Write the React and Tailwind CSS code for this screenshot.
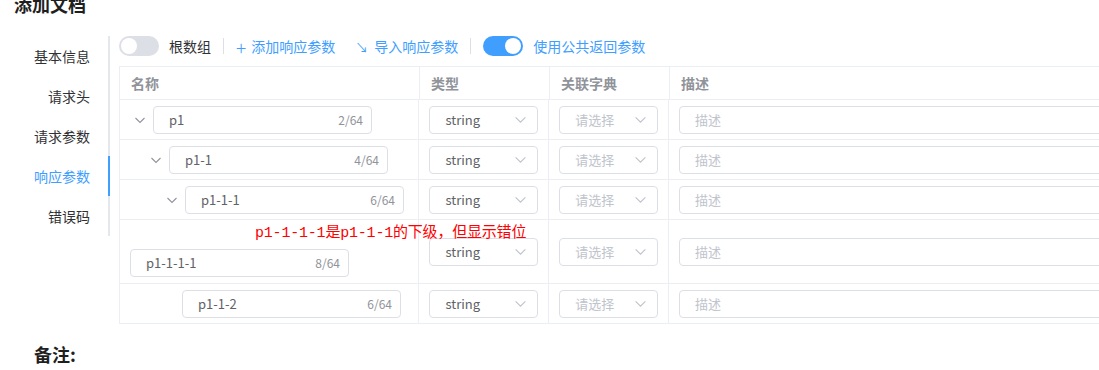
import React from "react"

const navItems = ["基本信息", "请求头", "请求参数", "响应参数", "错误码"]

const rows = [
  { name: "p1", count: "2/64", chevron: true, indent: 0, ml: 11 },
  { name: "p1-1", count: "4/64", chevron: true, indent: 16, ml: 11 },
  { name: "p1-1-1", count: "6/64", chevron: true, indent: 32, ml: 11 },
  { name: "p1-1-1-1", count: "8/64", chevron: false, ml: 11, tall: true },
  { name: "p1-1-2", count: "6/64", chevron: false, ml: 63 },
]

function Chevron({ className }) {
  return (
    <svg viewBox="0 0 12 12" className={className} fill="none" stroke="currentColor" strokeWidth="1.1">
      <path d="M1.5 4 L6 8.5 L10.5 4" />
    </svg>
  )
}

function Switch({ on }) {
  return (
    <div className={`w-10 h-5 rounded-full flex items-center px-[2px] ${on ? "bg-[#409eff] justify-end" : "bg-[#dcdfe6] justify-start"}`}>
      <div className="w-4 h-4 rounded-full bg-white"></div>
    </div>
  )
}

function NameInput({ name, count }) {
  return (
    <div className="w-[219px] h-[28px] border border-[#dcdfe6] rounded flex items-center justify-between pl-[15px] pr-[8px] bg-white">
      <span className="text-[13px] text-[#606266]">{name}</span>
      <span className="text-[12px] text-[#909399]">{count}</span>
    </div>
  )
}

function SelectBox({ width, value, placeholder }) {
  return (
    <div className={`${width} h-[28px] border border-[#dcdfe6] rounded flex items-center justify-between pl-[15px] pr-[10px] bg-white`}>
      <span className={`text-[13px] ${value ? "text-[#606266]" : "text-[#c0c4cc]"}`}>{value || placeholder}</span>
      <Chevron className="w-[13px] h-[13px] text-[#c0c4cc]" />
    </div>
  )
}

export default function App() {
  return (
    <div className="w-[1099px] h-[370px] overflow-hidden bg-white relative" style={{ fontFamily: '"Noto Sans CJK SC", "Liberation Sans", sans-serif' }}>
      <h1 className="pl-[14px] mt-[-9px] h-[26px] text-[18px] font-bold text-[#1f1f1f] leading-[26px]">添加文档</h1>

      <div className="flex mt-[19px]">
        <div className="w-[110px] shrink-0 border-r-2 border-[#e4e7ed] self-start">
          {navItems.map(item => (
            <div key={item}
              className={`h-10 flex items-center justify-end text-[14px] -mr-[2px] ${item === "响应参数" ? "pr-[18px] text-[#409eff] border-r-2 border-[#409eff]" : "pr-[20px] text-[#303133]"}`}>
              {item}
            </div>
          ))}
        </div>

        <div className="pl-[9px] flex-1 min-w-0">
          <div className="h-5 flex items-center text-[14px]">
            <Switch on={false} />
            <span className="ml-[10px] text-[#303133]">根数组</span>
            <span className="mx-[12px] w-px h-4 bg-[#dcdfe6]"></span>
            <span className="text-[#409eff] flex items-center">
              <span className="text-[19px] leading-none mr-[5px] font-extralight">+</span>添加响应参数
            </span>
            <span className="text-[#409eff] flex items-center ml-[20px]">
              <span className="text-[13px] leading-none mr-[6px]">↘</span>导入响应参数
            </span>
            <span className="mx-[12px] w-px h-4 bg-[#dcdfe6]"></span>
            <Switch on={true} />
            <span className="ml-[10px] text-[#409eff]">使用公共返回参数</span>
          </div>

          <div className="mt-[10px] w-[1000px] border-l border-t border-[#ebeef5]">
            <div className="flex h-[33px] border-b border-[#ebeef5] text-[14px] font-bold text-[#909399]">
              <div className="w-[300px] border-r border-[#ebeef5] flex items-center pl-[11px]">名称</div>
              <div className="w-[130px] border-r border-[#ebeef5] flex items-center pl-[11px]">类型</div>
              <div className="w-[120px] border-r border-[#ebeef5] flex items-center pl-[11px]">关联字典</div>
              <div className="flex-1 flex items-center pl-[11px]">描述</div>
            </div>

            {rows.map(row => (
              <div key={row.name} className={`flex border-b border-[#ebeef5] ${row.tall ? "h-[64px]" : "h-[40px]"}`}>
                <div className={`w-[300px] border-r border-[#ebeef5] flex ${row.tall ? "items-end pb-[6px]" : "items-center"}`}>
                  {row.chevron ? (
                    <div className="flex items-center" style={{ paddingLeft: 10 + row.indent }}>
                      <div className="w-5 flex justify-center mr-[3px]">
                        <Chevron className="w-[12px] h-[12px] text-[#909399]" />
                      </div>
                      <NameInput name={row.name} count={row.count} />
                    </div>
                  ) : (
                    <div style={{ marginLeft: row.ml - 1 }}>
                      <NameInput name={row.name} count={row.count} />
                    </div>
                  )}
                </div>
                <div className="w-[130px] border-r border-[#ebeef5] flex items-center pl-[10px]">
                  <SelectBox width="w-[109px]" value="string" />
                </div>
                <div className="w-[120px] border-r border-[#ebeef5] flex items-center pl-[10px]">
                  <SelectBox width="w-[99px]" placeholder="请选择" />
                </div>
                <div className="flex-1 flex items-center pl-[10px]">
                  <div className="w-[440px] h-[28px] border border-[#dcdfe6] rounded flex items-center pl-[15px] text-[13px] text-[#c0c4cc]">描述</div>
                </div>
              </div>
            ))}
          </div>
        </div>
      </div>

      <div className="pl-[34px] mt-[18px] text-[18px] font-bold text-[#1f1f1f] leading-[24px]">备注:</div>

      <div className="absolute left-[255px] top-[224px] text-[15px] text-[#ff0000] leading-[20px] whitespace-nowrap tracking-[-0.2px]"
        style={{ fontFamily: '"Liberation Mono", "Noto Sans CJK SC", monospace' }}>
        p1-1-1-1是p1-1-1的下级，但显示错位
      </div>
    </div>
  )
}
